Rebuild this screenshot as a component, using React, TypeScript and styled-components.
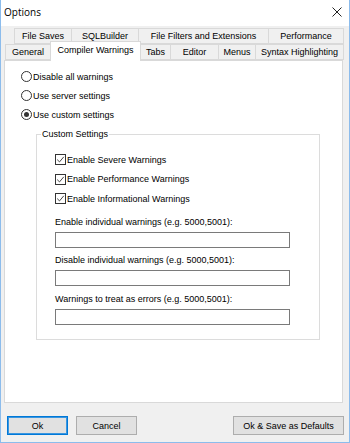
import styled, { createGlobalStyle } from 'styled-components';

const GlobalStyle = createGlobalStyle`
  html, body {
    margin: 0;
    padding: 0;
    background: #ffffff;
  }
  body {
    font-family: 'Liberation Sans', Arial, sans-serif;
    font-size: 9px;
    color: #000000;
  }
`;

const Window = styled.div`
  width: 350px;
  height: 443px;
  box-sizing: border-box;
  display: flex;
  flex-direction: column;
  background: #f0f0f0;
  border: 1px solid #8cbcec;
  border-top: none;
`;

const TitleBar = styled.div`
  height: 24px;
  display: flex;
  align-items: center;
  justify-content: space-between;
  padding: 0 7px 2px 3px;
  background: #ffffff;
`;

const Title = styled.div`
  font-family: 'Open Sans', 'Noto Sans', sans-serif;
  font-size: 10px;
  color: #000000;
`;

const Body = styled.div`
  flex: 1;
  display: flex;
  flex-direction: column;
  padding: 3px 5px 0 3px;
`;

const TabRow = styled.div<{ $indent: number; $height: number }>`
  display: flex;
  align-items: flex-end;
  height: ${(p) => p.$height}px;
  padding-left: ${(p) => p.$indent}px;
`;

const Tab = styled.div<{ $w: number; $active?: boolean }>`
  width: ${(p) => p.$w}px;
  height: ${(p) => (p.$active ? 20 : 16)}px;
  box-sizing: border-box;
  display: flex;
  align-items: center;
  justify-content: center;
  background: ${(p) => (p.$active ? '#ffffff' : '#f0f0f0')};
  border: 1px solid #d9d9d9;
  border-bottom: ${(p) => (p.$active ? 'none' : '1px solid #d9d9d9')};
  margin-left: -1px;
  margin-bottom: ${(p) => (p.$active ? -1 : 0)}px;
  padding-bottom: ${(p) => (p.$active ? 3 : 0)}px;
  position: relative;
  z-index: ${(p) => (p.$active ? 2 : 0)};
  white-space: nowrap;
  font-size: 9px;
`;

const Panel = styled.div`
  width: 339px;
  height: 343px;
  box-sizing: border-box;
  background: #ffffff;
  border: 1px solid #d9d9d9;
  padding: 6px 0 0 16px;
  display: flex;
  flex-direction: column;
  position: relative;
  z-index: 1;
`;

const OptionRow = styled.label`
  height: 19px;
  display: flex;
  align-items: center;
  gap: 1px;
`;

const Radio = styled.span<{ $checked?: boolean }>`
  width: 11px;
  height: 11px;
  box-sizing: border-box;
  border: 1px solid #333333;
  border-radius: 50%;
  background: #ffffff;
  display: flex;
  align-items: center;
  justify-content: center;
  &::after {
    content: '';
    display: ${(p) => (p.$checked ? 'block' : 'none')};
    width: 5px;
    height: 5px;
    border-radius: 50%;
    background: #333333;
  }
`;

const Check = styled.span`
  width: 11px;
  height: 11px;
  box-sizing: border-box;
  border: 1px solid #333333;
  background: #ffffff;
  display: flex;
  align-items: center;
  justify-content: center;
`;

const Group = styled.fieldset`
  width: 284px;
  height: 211px;
  box-sizing: border-box;
  margin: 5px 0 0 15px;
  padding: 0 0 0 18px;
  border: 1px solid #dcdcdc;
  display: flex;
  flex-direction: column;
`;

const Legend = styled.legend`
  margin-left: -14px;
  padding: 0 1px;
  font-size: 9px;
  line-height: 11px;
`;

const ChecksBox = styled.div`
  display: flex;
  flex-direction: column;
  padding-top: 10px;
  margin-bottom: 7px;
`;

const CheckRow = styled(OptionRow)`
  height: 19.5px;
`;

const FieldLabel = styled.div`
  height: 12px;
  line-height: 12px;
  margin-bottom: 4px;
`;

const TextBox = styled.div`
  width: 235px;
  height: 16px;
  box-sizing: border-box;
  border: 1px solid #7a7a7a;
  background: #ffffff;
  margin-bottom: 6.5px;
`;

const ButtonBar = styled.div`
  display: flex;
  align-items: center;
  gap: 8px;
  padding: 13px 0 0 3px;
`;

const Button = styled.div<{ $w: number; $primary?: boolean }>`
  width: ${(p) => p.$w}px;
  height: 19px;
  box-sizing: border-box;
  display: flex;
  align-items: center;
  justify-content: center;
  background: #e1e1e1;
  border: 1px solid ${(p) => (p.$primary ? '#0078d7' : '#adadad')};
  box-shadow: ${(p) => (p.$primary ? 'inset 0 0 0 1px #3a96e0' : 'none')};
  font-size: 9px;
`;

const Spacer = styled.div`
  flex: 1;
`;

const CheckMark = () => (
  <svg width="9" height="9" viewBox="0 0 9 9">
    <path d="M1.2 4.6 L3.5 6.9 L7.8 1.8" fill="none" stroke="#333" strokeWidth="0.9" />
  </svg>
);

const CloseIcon = () => (
  <svg width="10" height="10" viewBox="0 0 10 10">
    <path d="M0.5 0.5 L9.5 9.5 M9.5 0.5 L0.5 9.5" stroke="#222" strokeWidth="1" />
  </svg>
);

const backTabs = [
  { label: 'File Saves', w: 58 },
  { label: 'SQLBuilder', w: 68 },
  { label: 'File Filters and Extensions', w: 131 },
  { label: 'Performance', w: 76 },
];

const frontTabs = [
  { label: 'General', w: 46 },
  { label: 'Compiler Warnings', w: 91, active: true },
  { label: 'Tabs', w: 31 },
  { label: 'Editor', w: 49 },
  { label: 'Menus', w: 38 },
  { label: 'Syntax Highlighting', w: 89 },
];

const radios = [
  { label: 'Disable all warnings', checked: false },
  { label: 'Use server settings', checked: false },
  { label: 'Use custom settings', checked: true },
];

const checks = [
  'Enable Severe Warnings',
  'Enable Performance Warnings',
  'Enable Informational Warnings',
];

const fields = [
  'Enable individual warnings (e.g. 5000,5001):',
  'Disable individual warnings (e.g. 5000,5001):',
  'Warnings to treat as errors (e.g. 5000,5001):',
];

export default function App() {
  return (
    <>
      <GlobalStyle />
      <Window>
        <TitleBar>
          <Title>Options</Title>
          <CloseIcon />
        </TitleBar>
        <Body>
          <TabRow $indent={11} $height={15}>
            {backTabs.map((t) => (
              <Tab key={t.label} $w={t.w}>
                {t.label}
              </Tab>
            ))}
          </TabRow>
          <TabRow $indent={2} $height={16}>
            {frontTabs.map((t) => (
              <Tab key={t.label} $w={t.w} $active={t.active}>
                {t.label}
              </Tab>
            ))}
          </TabRow>
          <Panel>
            {radios.map((r) => (
              <OptionRow key={r.label}>
                <Radio $checked={r.checked} />
                {r.label}
              </OptionRow>
            ))}
            <Group>
              <Legend>Custom Settings</Legend>
              <ChecksBox>
                {checks.map((c) => (
                  <CheckRow key={c}>
                    <Check>
                      <CheckMark />
                    </Check>
                    {c}
                  </CheckRow>
                ))}
              </ChecksBox>
              {fields.map((f) => (
                <div key={f}>
                  <FieldLabel>{f}</FieldLabel>
                  <TextBox />
                </div>
              ))}
            </Group>
          </Panel>
          <ButtonBar>
            <Button $w={61} $primary>
              Ok
            </Button>
            <Button $w={61}>Cancel</Button>
            <Spacer />
            <Button $w={111}>Ok &amp; Save as Defaults</Button>
          </ButtonBar>
        </Body>
      </Window>
    </>
  );
}
